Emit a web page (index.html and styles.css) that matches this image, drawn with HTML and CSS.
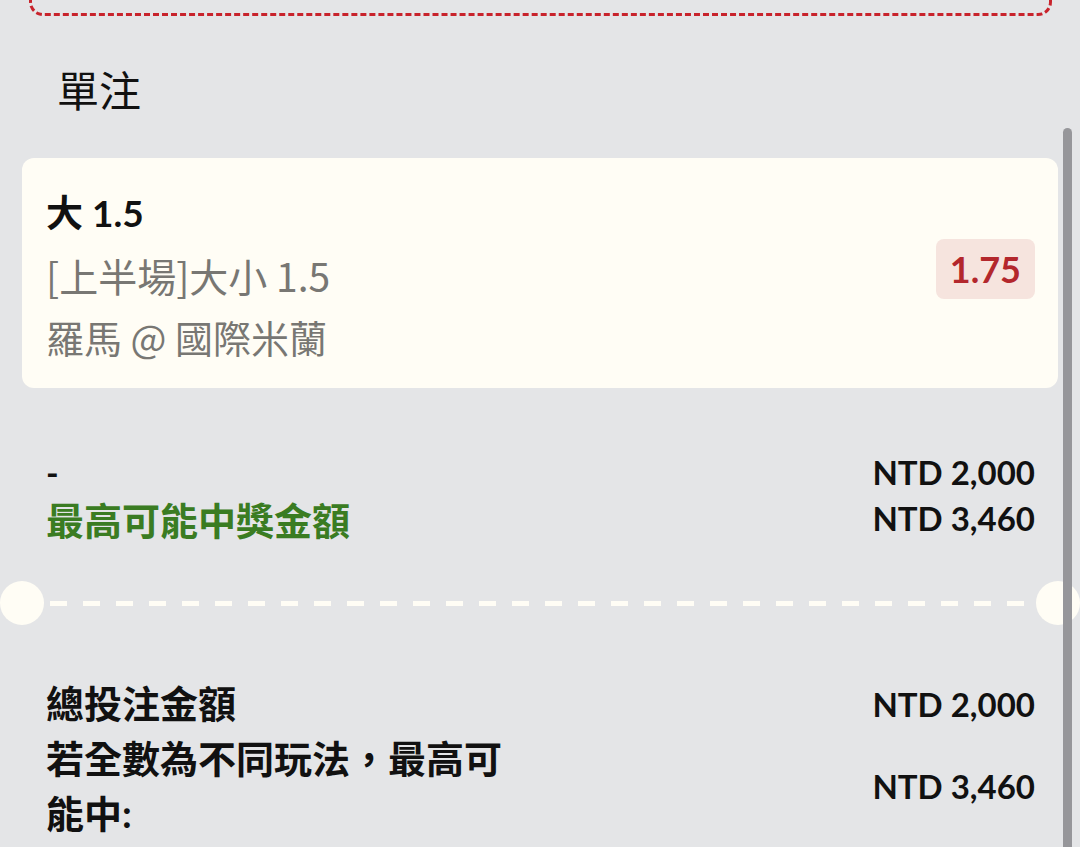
FILE: index.html
```html
<!DOCTYPE html>
<html lang="zh-Hant">
<head>
<meta charset="utf-8">
<title>單注</title>
<link rel="stylesheet" href="styles.css">
</head>
<body>
<div class="page">
  <div class="top-box"></div>
  <main class="content">
    <h2 class="title">單注</h2>
    <section class="card">
      <div class="card-info">
        <div class="pick">大 1.5</div>
        <div class="market">[上半場]大小 1.5</div>
        <div class="match">羅馬 @ 國際米蘭</div>
      </div>
      <div class="odds">1.75</div>
    </section>
    <section class="summary">
      <div class="row">
        <span class="dash-label">-</span>
        <span class="amount">NTD 2,000</span>
      </div>
      <div class="row">
        <span class="win-label">最高可能中獎金額</span>
        <span class="amount">NTD 3,460</span>
      </div>
    </section>
    <div class="divider">
      <span class="notch"></span>
      <span class="dashes"></span>
      <span class="notch"></span>
    </div>
    <section class="totals">
      <div class="trow">
        <span class="tlabel">總投注金額</span>
        <span class="amount">NTD 2,000</span>
      </div>
      <div class="trow">
        <span class="tlabel">若全數為不同玩法，最高可能中:</span>
        <span class="amount">NTD 3,460</span>
      </div>
    </section>
  </main>
  <div class="scrollbar"></div>
</div>
</body>
</html>
```

FILE: styles.css
```css
html, body {
  margin: 0;
  padding: 0;
}
body {
  background: #e4e5e7;
  font-family: Lato, "Noto Sans CJK TC", "Noto Sans", sans-serif;
  color: #111;
  overflow: hidden;
}
.page {
  position: relative;
  width: 1080px;
  height: 847px;
  overflow: hidden;
}
.top-box {
  margin: -90px 28px 0 29px;
  height: 100px;
  border: 3px dashed #c8232c;
  border-radius: 14px;
}
.content {
  padding: 0 22px;
}
.title {
  margin: 47px 0 0 0;
  padding-left: 35px;
  font-size: 42px;
  font-weight: 400;
  line-height: 56px;
  color: #111;
}
.card {
  margin-top: 39px;
  background: #fffdf5;
  border-radius: 12px;
  padding: 24px 23px 20px 24px;
  display: flex;
  align-items: center;
  justify-content: space-between;
}
.card-info {
  display: flex;
  flex-direction: column;
}
.pick {
  font-size: 37px;
  line-height: 62px;
  font-weight: 700;
  color: #111;
}
.market, .match {
  font-family: "Noto Sans CJK TC", "Noto Sans", sans-serif;
  font-size: 38px;
  line-height: 62px;
  color: #787773;
}
.market {
  font-size: 39px;
}
.odds {
  background: #f6e4de;
  color: #b3272c;
  font-weight: 700;
  font-size: 36px;
  line-height: 60px;
  padding: 0 14px;
  border-radius: 8px;
  margin-bottom: 12px;
}
.summary {
  margin-top: 61px;
  padding: 0 23px 0 24px;
}
.row {
  display: flex;
  justify-content: space-between;
  align-items: center;
  height: 46px;
}
.dash-label {
  font-size: 34px;
  font-weight: 700;
}
.win-label {
  font-size: 38px;
  font-weight: 700;
  color: #3a7c22;
}
.amount {
  font-size: 33px;
  font-weight: 700;
  color: #111;
  white-space: nowrap;
}
.divider {
  margin: 40px -22px 0 -22px;
  height: 44px;
  display: flex;
  align-items: center;
}
.notch {
  width: 44px;
  height: 44px;
  border-radius: 50%;
  background: #fffdf5;
  flex: none;
}
.dashes {
  flex: 1;
  margin: 0 6px;
  height: 5px;
  background: repeating-linear-gradient(to right, #fffdf5 0 17px, transparent 17px 33px);
}
.totals {
  margin-top: 51px;
  padding: 0 23px 0 24px;
}
.trow {
  display: flex;
  justify-content: space-between;
  align-items: center;
}
.tlabel {
  width: 480px;
  font-size: 38px;
  line-height: 55px;
  font-weight: 700;
  color: #111;
}
.scrollbar {
  position: absolute;
  left: 1063px;
  top: 128px;
  width: 9px;
  height: 760px;
  border-radius: 5px;
  background: #96969a;
}
```
